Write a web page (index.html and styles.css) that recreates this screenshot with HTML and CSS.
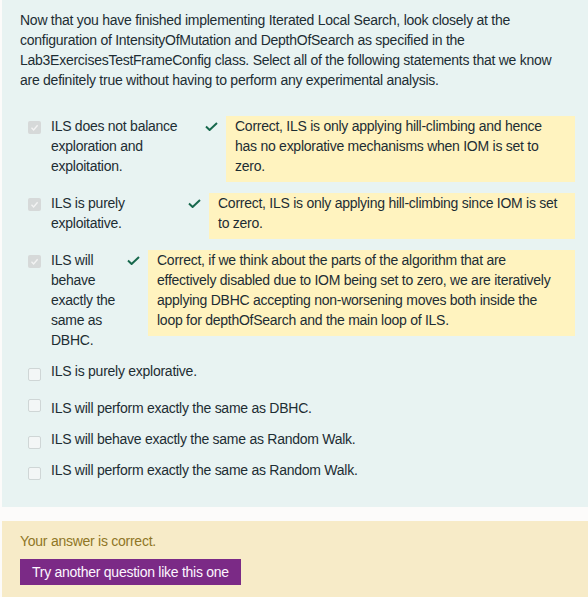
FILE: index.html
```html
<!DOCTYPE html>
<html lang="en">
<head>
<meta charset="utf-8">
<title>Question</title>
<link rel="stylesheet" href="styles.css">
</head>
<body>
<div class="que">
  <div class="formulation">
    <p class="qtext">Now that you have finished implementing Iterated Local Search, look closely at the configuration of IntensityOfMutation and DepthOfSearch as specified in the Lab3ExercisesTestFrameConfig class. Select all of the following statements that we know are definitely true without having to perform any experimental analysis.</p>
    <div class="answer">
      <div class="row">
        <span class="cb checked"><svg viewBox="0 0 13 13" width="13" height="13"><polyline points="3.5,6.8 5.6,8.9 9.6,4.2" fill="none" stroke="#f3f3f3" stroke-width="1.4"/></svg></span>
        <div class="lbl w1">ILS does not balance exploration and exploitation.</div>
        <svg class="tick" viewBox="0 0 13 9" width="13" height="9"><polyline points="1,4.6 4.6,8 12,1" fill="none" stroke="#17684d" stroke-width="2"/></svg>
        <div class="fb">Correct, ILS is only applying hill-climbing and hence has no explorative mechanisms when IOM is set to zero.</div>
      </div>
      <div class="row">
        <span class="cb checked"><svg viewBox="0 0 13 13" width="13" height="13"><polyline points="3.5,6.8 5.6,8.9 9.6,4.2" fill="none" stroke="#f3f3f3" stroke-width="1.4"/></svg></span>
        <div class="lbl w2">ILS is purely exploitative.</div>
        <svg class="tick" viewBox="0 0 13 9" width="13" height="9"><polyline points="1,4.6 4.6,8 12,1" fill="none" stroke="#17684d" stroke-width="2"/></svg>
        <div class="fb">Correct, ILS is only applying hill-climbing since IOM is set to zero.</div>
      </div>
      <div class="row">
        <span class="cb checked"><svg viewBox="0 0 13 13" width="13" height="13"><polyline points="3.5,6.8 5.6,8.9 9.6,4.2" fill="none" stroke="#f3f3f3" stroke-width="1.4"/></svg></span>
        <div class="lbl w3">ILS will behave exactly the same as DBHC.</div>
        <svg class="tick" viewBox="0 0 13 9" width="13" height="9"><polyline points="1,4.6 4.6,8 12,1" fill="none" stroke="#17684d" stroke-width="2"/></svg>
        <div class="fb">Correct, if we think about the parts of the algorithm that are effectively disabled due to IOM being set to zero, we are iteratively applying DBHC accepting non-worsening moves both inside the loop for depthOfSearch and the main loop of ILS.</div>
      </div>
      <div class="row">
        <span class="cb"></span>
        <div class="lbl">ILS is purely explorative.</div>
      </div>
      <div class="row">
        <span class="cb"></span>
        <div class="lbl low">ILS will perform exactly the same as DBHC.</div>
      </div>
      <div class="row">
        <span class="cb"></span>
        <div class="lbl">ILS will behave exactly the same as Random Walk.</div>
      </div>
      <div class="row">
        <span class="cb"></span>
        <div class="lbl">ILS will perform exactly the same as Random Walk.</div>
      </div>
    </div>
  </div>
  <div class="outcome">
    <div class="state">Your answer is correct.</div>
    <button class="btn" type="button">Try another question like this one</button>
  </div>
</div>
</body>
</html>
```

FILE: styles.css
```css
html, body {
  margin: 0;
  padding: 0;
}

body {
  background: #fcfbfa;
  font-family: "Liberation Sans", Arial, sans-serif;
  font-size: 14px;
  line-height: 20px;
  letter-spacing: -0.26px;
  color: #1d2d33;
}

.que {
  margin-left: 2px;
}

.formulation {
  background: #e8f3f2;
  padding: 10px 13px 27px 18px;
}

.qtext {
  margin: 0 10px 26px 0;
}

.answer {
  display: flex;
  flex-direction: column;
  gap: 11px;
}

.row {
  display: flex;
  align-items: flex-start;
}

.cb {
  flex: none;
  box-sizing: border-box;
  width: 13px;
  height: 13px;
  margin: 7px 10px 0 8px;
  border: 1px solid #cfd6d6;
  border-radius: 2px;
  background: #f3f6f6;
}

.cb.checked {
  margin-top: 5px;
  border: none;
  background: #d6d9d9;
}

.cb svg {
  display: block;
}

.lbl {
  flex: none;
}

.lbl.w1 { width: 150px; }
.lbl.w2 { width: 133px; }
.lbl.w3 { width: 72px; }

.lbl.low {
  padding-top: 6px;
}

.tick {
  flex: none;
  margin: 6px 8px 0 4px;
}

.fb {
  flex: 1;
  background: #fff3bf;
  padding: 0 9px 6px 9px;
}

.outcome {
  margin-top: 14px;
  background: #f7ebc8;
  padding: 10px 18px 14px;
}

.state {
  color: #8f7626;
}

.btn {
  margin-top: 8px;
  display: inline-block;
  border: none;
  border-radius: 0;
  background: #7b2a86;
  color: #fdf6ff;
  font-family: inherit;
  font-size: 14px;
  line-height: 20px;
  letter-spacing: -0.26px;
  padding: 3px 12px;
}
```
